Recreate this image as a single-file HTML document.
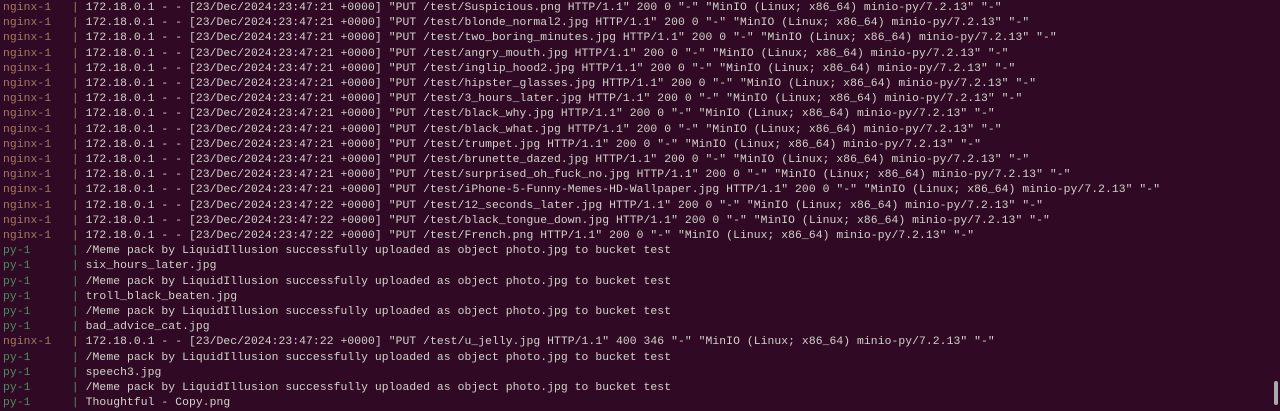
<!DOCTYPE html><html><head><style>
body{margin:0;background:#300a24;width:1280px;height:405px;overflow:hidden;position:relative}
pre{margin:0;position:absolute;left:3px;top:1px;font-family:"Liberation Mono",monospace;font-size:11.35px;letter-spacing:0.08px;line-height:15.2px;color:#d3d0cc;white-space:pre}
.n{color:#a47a62}.p{color:#4a8f62}
.sb{position:absolute;left:1274px;top:381px;width:4px;height:24px;background:#aaa;border-radius:2px}
</style></head><body><pre><span class="n">nginx-1   |</span> 172.18.0.1 - - [23/Dec/2024:23:47:21 +0000] "PUT /test/Suspicious.png HTTP/1.1" 200 0 "-" "MinIO (Linux; x86_64) minio-py/7.2.13" "-"
<span class="n">nginx-1   |</span> 172.18.0.1 - - [23/Dec/2024:23:47:21 +0000] "PUT /test/blonde_normal2.jpg HTTP/1.1" 200 0 "-" "MinIO (Linux; x86_64) minio-py/7.2.13" "-"
<span class="n">nginx-1   |</span> 172.18.0.1 - - [23/Dec/2024:23:47:21 +0000] "PUT /test/two_boring_minutes.jpg HTTP/1.1" 200 0 "-" "MinIO (Linux; x86_64) minio-py/7.2.13" "-"
<span class="n">nginx-1   |</span> 172.18.0.1 - - [23/Dec/2024:23:47:21 +0000] "PUT /test/angry_mouth.jpg HTTP/1.1" 200 0 "-" "MinIO (Linux; x86_64) minio-py/7.2.13" "-"
<span class="n">nginx-1   |</span> 172.18.0.1 - - [23/Dec/2024:23:47:21 +0000] "PUT /test/inglip_hood2.jpg HTTP/1.1" 200 0 "-" "MinIO (Linux; x86_64) minio-py/7.2.13" "-"
<span class="n">nginx-1   |</span> 172.18.0.1 - - [23/Dec/2024:23:47:21 +0000] "PUT /test/hipster_glasses.jpg HTTP/1.1" 200 0 "-" "MinIO (Linux; x86_64) minio-py/7.2.13" "-"
<span class="n">nginx-1   |</span> 172.18.0.1 - - [23/Dec/2024:23:47:21 +0000] "PUT /test/3_hours_later.jpg HTTP/1.1" 200 0 "-" "MinIO (Linux; x86_64) minio-py/7.2.13" "-"
<span class="n">nginx-1   |</span> 172.18.0.1 - - [23/Dec/2024:23:47:21 +0000] "PUT /test/black_why.jpg HTTP/1.1" 200 0 "-" "MinIO (Linux; x86_64) minio-py/7.2.13" "-"
<span class="n">nginx-1   |</span> 172.18.0.1 - - [23/Dec/2024:23:47:21 +0000] "PUT /test/black_what.jpg HTTP/1.1" 200 0 "-" "MinIO (Linux; x86_64) minio-py/7.2.13" "-"
<span class="n">nginx-1   |</span> 172.18.0.1 - - [23/Dec/2024:23:47:21 +0000] "PUT /test/trumpet.jpg HTTP/1.1" 200 0 "-" "MinIO (Linux; x86_64) minio-py/7.2.13" "-"
<span class="n">nginx-1   |</span> 172.18.0.1 - - [23/Dec/2024:23:47:21 +0000] "PUT /test/brunette_dazed.jpg HTTP/1.1" 200 0 "-" "MinIO (Linux; x86_64) minio-py/7.2.13" "-"
<span class="n">nginx-1   |</span> 172.18.0.1 - - [23/Dec/2024:23:47:21 +0000] "PUT /test/surprised_oh_fuck_no.jpg HTTP/1.1" 200 0 "-" "MinIO (Linux; x86_64) minio-py/7.2.13" "-"
<span class="n">nginx-1   |</span> 172.18.0.1 - - [23/Dec/2024:23:47:21 +0000] "PUT /test/iPhone-5-Funny-Memes-HD-Wallpaper.jpg HTTP/1.1" 200 0 "-" "MinIO (Linux; x86_64) minio-py/7.2.13" "-"
<span class="n">nginx-1   |</span> 172.18.0.1 - - [23/Dec/2024:23:47:22 +0000] "PUT /test/12_seconds_later.jpg HTTP/1.1" 200 0 "-" "MinIO (Linux; x86_64) minio-py/7.2.13" "-"
<span class="n">nginx-1   |</span> 172.18.0.1 - - [23/Dec/2024:23:47:22 +0000] "PUT /test/black_tongue_down.jpg HTTP/1.1" 200 0 "-" "MinIO (Linux; x86_64) minio-py/7.2.13" "-"
<span class="n">nginx-1   |</span> 172.18.0.1 - - [23/Dec/2024:23:47:22 +0000] "PUT /test/French.png HTTP/1.1" 200 0 "-" "MinIO (Linux; x86_64) minio-py/7.2.13" "-"
<span class="p">py-1      |</span> /Meme pack by LiquidIllusion successfully uploaded as object photo.jpg to bucket test
<span class="p">py-1      |</span> six_hours_later.jpg
<span class="p">py-1      |</span> /Meme pack by LiquidIllusion successfully uploaded as object photo.jpg to bucket test
<span class="p">py-1      |</span> troll_black_beaten.jpg
<span class="p">py-1      |</span> /Meme pack by LiquidIllusion successfully uploaded as object photo.jpg to bucket test
<span class="p">py-1      |</span> bad_advice_cat.jpg
<span class="n">nginx-1   |</span> 172.18.0.1 - - [23/Dec/2024:23:47:22 +0000] "PUT /test/u_jelly.jpg HTTP/1.1" 400 346 "-" "MinIO (Linux; x86_64) minio-py/7.2.13" "-"
<span class="p">py-1      |</span> /Meme pack by LiquidIllusion successfully uploaded as object photo.jpg to bucket test
<span class="p">py-1      |</span> speech3.jpg
<span class="p">py-1      |</span> /Meme pack by LiquidIllusion successfully uploaded as object photo.jpg to bucket test
<span class="p">py-1      |</span> Thoughtful - Copy.png
</pre><div class="sb"></div></body></html>
